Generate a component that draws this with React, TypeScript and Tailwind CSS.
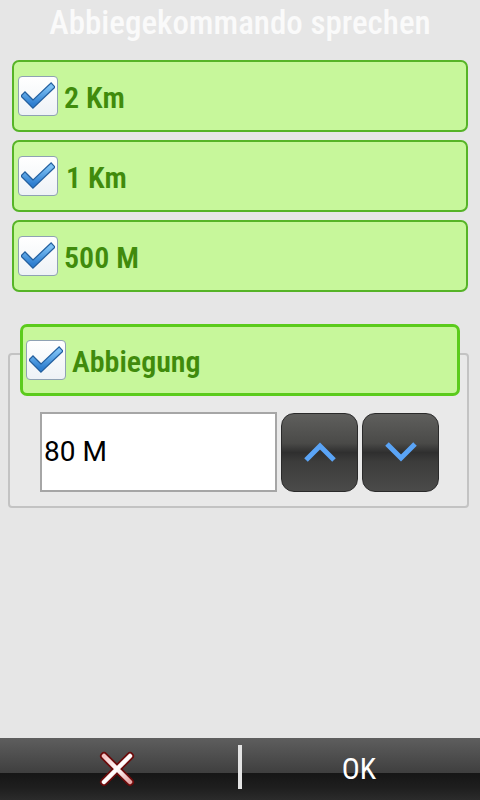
import React from 'react'

// ─── Checkbox ─────────────────────────────────────────────────────────────────

function CheckBox() {
  return (
    <div className="w-[40px] h-[40px] shrink-0 rounded-[4px] border-[1.5px] border-[#8fa2b4] bg-gradient-to-b from-white to-[#eef2f6] flex items-center justify-center">
      <svg width="34" height="30" viewBox="0 0 34 30">
        <defs>
          <linearGradient id="chk" x1="0" y1="0" x2="0" y2="1">
            <stop offset="0" stopColor="#7cc0f4" />
            <stop offset="1" stopColor="#2f7fd0" />
          </linearGradient>
        </defs>
        <path d="M4 15 L12 23 L30 6" fill="none" stroke="#235f9e" strokeWidth="7" strokeLinecap="square" strokeLinejoin="miter" />
        <path d="M4 15 L12 23 L30 6" fill="none" stroke="url(#chk)" strokeWidth="4.5" strokeLinecap="square" strokeLinejoin="miter" />
      </svg>
    </div>
  )
}

// ─── Option row ───────────────────────────────────────────────────────────────

function OptionRow({ label, wide }: { label: string; wide?: boolean }) {
  return (
    <div className="h-[72px] rounded-[7px] border-2 border-[#56b427] bg-[#c7f79b] flex items-center pl-[4px]">
      <CheckBox />
      <span className={`${wide ? 'ml-[8px]' : 'ml-[6px]'} mt-[3px] text-[30px] font-semibold text-[#408b0c] leading-none`}>
        {label}
      </span>
    </div>
  )
}

// ─── Spin button ──────────────────────────────────────────────────────────────

function SpinButton({ up }: { up?: boolean }) {
  return (
    <div className="w-[77px] h-[79px] rounded-[13px] border border-[#2a2a2a] bg-[linear-gradient(to_bottom,#5f5f5d_0%,#4a4a48_38%,#2f2f2f_50%,#3c3c3b_62%,#4b4b4a_100%)] flex items-center justify-center">
      <svg width="34" height="22" viewBox="0 0 34 22">
        {up ? (
          <path d="M3 19 L17 5 L31 19" fill="none" stroke="#5aa4f6" strokeWidth="5" strokeLinejoin="miter" />
        ) : (
          <path d="M3 3 L17 17 L31 3" fill="none" stroke="#5aa4f6" strokeWidth="5" strokeLinejoin="miter" />
        )}
      </svg>
    </div>
  )
}

// ─── Page ─────────────────────────────────────────────────────────────────────

export default function App() {
  return (
    <div className="w-[480px] h-[800px] bg-[#e6e6e6] flex flex-col overflow-hidden font-['Roboto_Condensed','Liberation_Sans',sans-serif]">
      {/* Title */}
      <div className="h-[60px] flex justify-center pt-[3px]">
        <h1 className="text-[33px] font-medium text-[#fafafa] leading-[40px]">
          Abbiegekommando sprechen
        </h1>
      </div>

      {/* Distance options */}
      <div className="px-[12px] flex flex-col gap-[8px]">
        <OptionRow label="2 Km" />
        <OptionRow label="1 Km" wide />
        <OptionRow label="500 M" />
      </div>

      {/* Turn group */}
      <div className="mt-[61px] mx-[8px] w-[461px] rounded-[4px] border-2 border-[#c3c3c3] bg-[#e9e9e9] pb-[14px]">
        <div className="-mt-[31px] ml-[10px] mr-[7px] h-[72px] rounded-[7px] border-[3px] border-[#5bcb1c] bg-[#c7f79b] flex items-center pl-[3px]">
          <CheckBox />
          <span className="ml-[6px] mt-[3px] text-[30px] font-semibold text-[#408b0c] leading-none">
            Abbiegung
          </span>
        </div>
        <div className="mt-[16px] ml-[30px] flex items-center gap-[4px]">
          <div className="w-[237px] h-[80px] bg-white border-2 border-[#a6a6a6] flex items-center pl-[2px]">
            <span className="text-[28px] text-black font-['Roboto',sans-serif] leading-none">80 M</span>
          </div>
          <SpinButton up />
          <SpinButton />
        </div>
      </div>

      <div className="flex-1" />

      {/* Bottom bar */}
      <div className="h-[62px] bg-[linear-gradient(to_bottom,#5e5e5e_0%,#3f3f3f_56%,#161616_57%,#1e1e1e_80%,#2b2b2b_100%)] flex items-center">
        <div className="flex-1 flex justify-center">
          <svg width="36" height="36" viewBox="0 0 36 36" className="-ml-[5px]">
            <defs>
              <linearGradient id="xg" x1="0" y1="0" x2="1" y2="1">
                <stop offset="0" stopColor="#f4c4c4" />
                <stop offset="0.5" stopColor="#ffffff" />
                <stop offset="1" stopColor="#e6a6a6" />
              </linearGradient>
            </defs>
            <path d="M5 5 L31 31 M31 5 L5 31" stroke="#6b0b0b" strokeWidth="8" strokeLinecap="round" />
            <path d="M5 5 L31 31 M31 5 L5 31" stroke="url(#xg)" strokeWidth="4.5" strokeLinecap="round" />
          </svg>
        </div>
        <div className="w-[4px] h-[44px] bg-[#e4e4e4] -mt-[4px]" />
        <div className="flex-1 flex justify-center">
          <span className="text-[30px] text-white leading-none pr-[4px]">OK</span>
        </div>
      </div>
    </div>
  )
}
